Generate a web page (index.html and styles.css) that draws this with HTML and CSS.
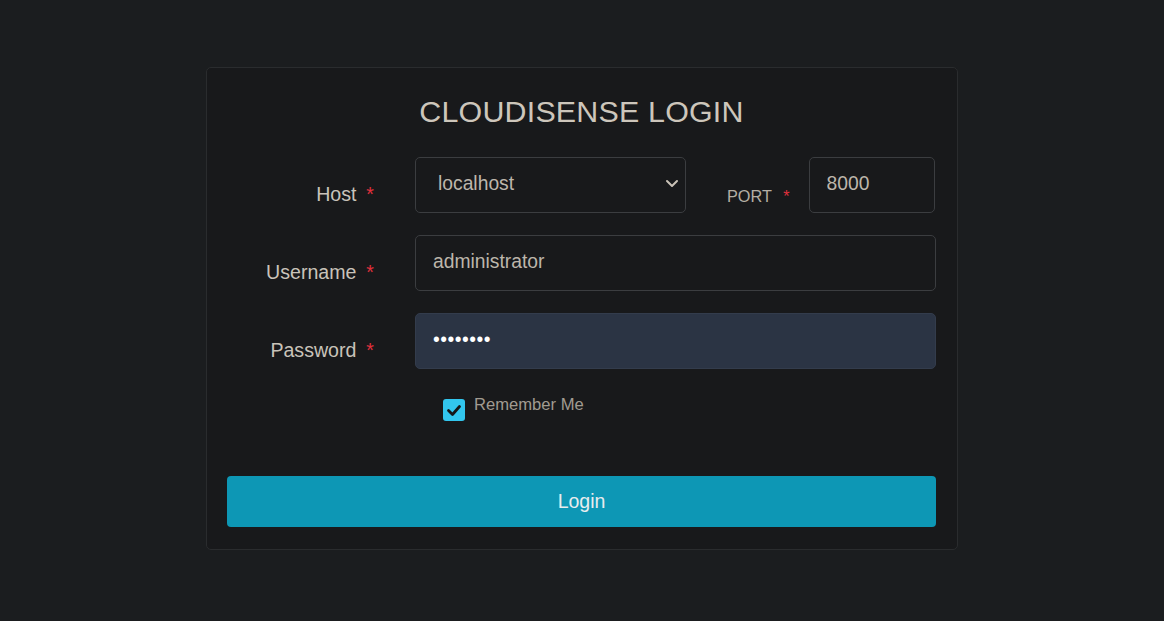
FILE: index.html
```html
<!DOCTYPE html>
<html lang="en">
<head>
<meta charset="utf-8">
<title>Cloudisense Login</title>
<link rel="stylesheet" href="styles.css">
</head>
<body>
<main class="card">
  <h1 class="title">CLOUDISENSE LOGIN</h1>
  <form class="form">
    <div class="row">
      <label class="label">Host <span class="req">*</span></label>
      <div class="select-wrap">
        <select class="field select"><option>localhost</option></select>
        <svg class="chev" width="14" height="9" viewBox="0 0 14 9"><path d="M2 2 L7 7 L12 2" fill="none" stroke="#c9c2b7" stroke-width="2" stroke-linecap="round" stroke-linejoin="round"/></svg>
      </div>
      <label class="port-label">PORT <span class="req">*</span></label>
      <input class="field port" type="text" value="8000">
    </div>
    <div class="row">
      <label class="label">Username <span class="req">*</span></label>
      <input class="field wide" type="text" value="administrator">
    </div>
    <div class="row">
      <label class="label">Password <span class="req">*</span></label>
      <input class="field wide pass" type="password" value="password">
    </div>
    <div class="remember">
      <span class="check"><svg width="22" height="22" viewBox="0 0 22 22"><path d="M5.5 11.5 L9.5 15.5 L16.5 7.5" fill="none" stroke="#151617" stroke-width="2.8" stroke-linecap="round" stroke-linejoin="round"/></svg></span>
      <span class="remember-text">Remember Me</span>
    </div>
    <button class="btn" type="button">Login</button>
  </form>
</main>
</body>
</html>
```
FILE: styles.css
```css
* { box-sizing: border-box; }
html, body { margin: 0; padding: 0; }
body {
  background: #1b1d1f;
  font-family: "Liberation Sans", Arial, sans-serif;
  color: #c9c3ba;
  height: 621px;
  overflow: hidden;
}
.card {
  width: 752px;
  margin: 67px auto 0;
  background: #18191b;
  border: 1px solid #2a2c2e;
  border-radius: 5px;
  padding: 24px 21px 22px 20px;
}
.title {
  margin: 0;
  text-align: center;
  font-weight: 400;
  font-size: 30.4px;
  line-height: 38px;
  color: #cdc6bb;
  letter-spacing: 0.2px;
}
.form {
  margin-top: 27px;
  display: flex;
  flex-direction: column;
}
.row {
  display: flex;
  align-items: flex-start;
  margin-bottom: 22px;
}
.label {
  width: 147px;
  margin-right: 41px;
  text-align: right;
  font-size: 19.6px;
  padding-top: 26px;
  line-height: 22px;
  color: #c9c3ba;
  white-space: nowrap;
}
.req {
  color: #e0303c;
  margin-left: 4.5px;
}
.field {
  height: 56px;
  background: #18191b;
  border: 1px solid #3b3d40;
  border-radius: 5px;
  color: #bdb6ab;
  font-family: "Liberation Sans", Arial, sans-serif;
  font-size: 19.3px;
  padding: 0 17px 3px;
  outline: none;
}
.select-wrap {
  position: relative;
  width: 271px;
}
.select {
  width: 100%;
  appearance: none;
  -webkit-appearance: none;
  padding-left: 22px;
}
.chev {
  position: absolute;
  right: 7px;
  top: 22px;
}
.port-label {
  margin-left: 41px;
  margin-right: 19px;
  padding-top: 30px;
  font-size: 16.3px;
  line-height: 18px;
  color: #b4aea4;
  white-space: nowrap;
}
.port-label .req { margin-left: 7px; }
.port {
  width: 126px;
}
.wide {
  width: 521px;
}
.pass {
  background: #2b3444;
  border-color: #333c4c;
  color: #ffffff;
  letter-spacing: 0.5px;
}
.remember {
  display: flex;
  align-items: flex-start;
  margin-left: 216px;
  margin-top: 6px;
}
.check {
  width: 22px;
  height: 22px;
  border-radius: 3px;
  background: #32c6ee;
  display: flex;
  margin-top: 2px;
}
.remember-text {
  margin-left: 9px;
  font-size: 16.6px;
  line-height: 16px;
  color: #a19b91;
}
.btn {
  margin-top: 55px;
  height: 51px;
  width: 100%;
  background: #0d97b5;
  border: none;
  border-radius: 4px;
  color: #e8ecee;
  font-family: "Liberation Sans", Arial, sans-serif;
  font-size: 19.5px;
}
```
